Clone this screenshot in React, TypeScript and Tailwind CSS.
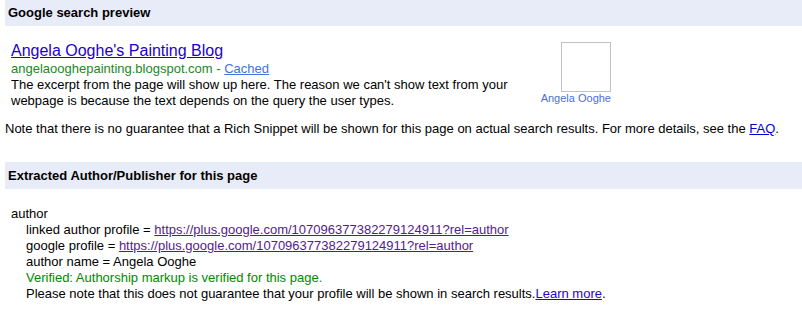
export default function App() {
  return (
    <div className="min-h-screen bg-white pl-[5px] font-['Liberation_Sans',Arial,sans-serif] text-[13px] text-black">
      {/* Preview section */}
      <div className="flex h-[26px] items-center bg-[#e8ecf8] pl-[3px] font-bold">Google search preview</div>

      <div className="mt-[15px] flex pl-[6px]">
        <div className="w-[530px]">
          <a href="#" className="block text-[16px] leading-[20px] text-[#2200cc] underline">
            Angela Ooghe's Painting Blog
          </a>
          <div className="leading-[16px]">
            <span className="text-[#228822]">angelaooghepainting.blogspot.com</span>
            <span className="text-[#228822]"> - </span>
            <a href="#" className="text-[#4272db] underline">Cached</a>
          </div>
          <div className="w-[512px] leading-[16px]">
            The excerpt from the page will show up here. The reason we can't show text from your webpage is because the text depends on the query the user types.
          </div>
        </div>
        <div className="mt-[1px] flex w-[70px] flex-col items-end">
          <div className="h-[50px] w-[50px] border border-[#c2c2c2] bg-white" />
          <div className="whitespace-nowrap text-[11px] leading-[13px] text-[#4a6fe0]">Angela Ooghe</div>
        </div>
      </div>

      <div className="mt-[12px] leading-[16px]">
        Note that there is no guarantee that a Rich Snippet will be shown for this page on actual search results. For more details, see the{' '}
        <a href="#" className="text-[#0000cc] underline">FAQ</a>.
      </div>

      {/* Extracted section */}
      <div className="mt-[25px] flex h-[27px] items-center bg-[#e8ecf8] pl-[3px] font-bold">
        Extracted Author/Publisher for this page
      </div>

      <div className="mt-[17px] pl-[6px] leading-[16px]">
        <div>author</div>
        <div className="pl-[15px]">
          <div>
            linked author profile ={' '}
            <a href="#" className="text-[#551a8b] underline">https://plus.google.com/107096377382279124911?rel=author</a>
          </div>
          <div>
            google profile ={' '}
            <a href="#" className="text-[#551a8b] underline">https://plus.google.com/107096377382279124911?rel=author</a>
          </div>
          <div>author name = Angela Ooghe</div>
          <div className="text-[#008800]">Verified: Authorship markup is verified for this page.</div>
          <div>
            Please note that this does not guarantee that your profile will be shown in search results.
            <a href="#" className="text-[#2a00cc] underline">Learn more</a>.
          </div>
        </div>
      </div>
    </div>
  );
}
